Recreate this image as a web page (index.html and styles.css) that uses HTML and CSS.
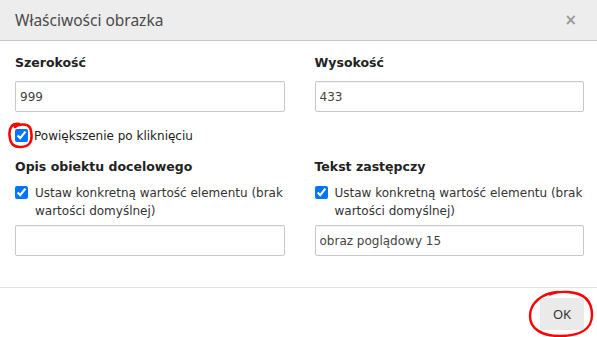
FILE: index.html
```html
<!DOCTYPE html>
<html lang="pl">
<head>
<meta charset="UTF-8">
<title>Właściwości obrazka</title>
<link rel="stylesheet" href="styles.css">
</head>
<body>
<div class="dialog">
  <header class="dlg-head">
    <span class="dlg-title">Właściwości obrazka</span>
    <span class="dlg-close">×</span>
  </header>
  <main class="dlg-body">
    <div class="row">
      <div class="field">
        <label class="lbl">Szerokość</label>
        <input class="txt" type="text" value="999">
      </div>
      <div class="field">
        <label class="lbl">Wysokość</label>
        <input class="txt" type="text" value="433">
      </div>
    </div>
    <label class="check zoom-check">
      <input type="checkbox" checked>
      <span>Powiększenie po kliknięciu</span>
      <svg class="scribble scribble-1" width="26" height="27" viewBox="0 0 26 27"><path d="M11 2 C4 1 1 6 1.5 13 C2 21 5 25.5 13 25 C21 24.5 24 21 23.5 13 C23 6 22 2 14 2.5 C10 3 8 4 7 5" fill="none" stroke="#f00" stroke-width="2.6" stroke-linecap="round"/></svg>
    </label>
    <div class="row">
      <div class="field">
        <label class="lbl lbl-sm">Opis obiektu docelowego</label>
        <label class="check">
          <input type="checkbox" checked>
          <span>Ustaw konkretną wartość elementu (brak wartości domyślnej)</span>
        </label>
        <input class="txt" type="text" value="">
      </div>
      <div class="field">
        <label class="lbl lbl-sm">Tekst zastępczy</label>
        <label class="check">
          <input type="checkbox" checked>
          <span>Ustaw konkretną wartość elementu (brak wartości domyślnej)</span>
        </label>
        <input class="txt" type="text" value="obraz poglądowy 15">
      </div>
    </div>
  </main>
  <footer class="dlg-foot">
    <button class="ok-btn">OK</button>
    <svg class="scribble scribble-2" width="68" height="50" viewBox="0 0 68 50"><path d="M30 3 C14 4 2 14 2 27 C2 40 14 47 32 47 C52 47 64 40 64 26 C64 12 56 4 40 3 C32 2.5 26 3.5 22 5.5" fill="none" stroke="#f00" stroke-width="2.4" stroke-linecap="round"/></svg>
  </footer>
</div>
</body>
</html>
```

FILE: styles.css
```css
body { margin:0; background:#fff; font-family:"DejaVu Sans", Verdana, sans-serif; font-size:12px; color:#333; }
.dialog { width:597px; height:337px; position:relative; overflow:hidden; }
.dlg-head { background:#ededed; border-bottom:1px solid #c8c8c8; display:flex; align-items:center; justify-content:space-between; padding:0 20px 0 15px; box-sizing:border-box; height:41px; }
.dlg-title { font-family:"Noto Sans","Open Sans",sans-serif; font-size:15.5px; color:#4a4a4a; }
.dlg-close { font-family:"DejaVu Sans",sans-serif; font-size:15px; font-weight:bold; color:#999; }
.dlg-body { padding:13px 13px 0 15px; }
.row { display:grid; grid-template-columns:1fr 1fr; column-gap:30px; }
.field { display:flex; flex-direction:column; }
.lbl { font-weight:bold; font-size:12.5px; color:#222; height:18px; line-height:18px; margin-bottom:9px; }
.lbl-sm { margin-bottom:8px; }
.txt { box-sizing:border-box; height:31px; width:100%; border:1px solid #c9c9c9; border-radius:2px; background:#fff; padding:0 4px; font-family:"DejaVu Sans",Verdana,sans-serif; font-size:12px; color:#444; margin:0; box-shadow:inset 0 1px 0 #f4f4f4; }
.check { display:flex; align-items:flex-start; line-height:18px; color:#333; position:relative; margin-bottom:5px; }
.check input { width:13px; height:13px; margin:2px 7px 0 0; flex:none; }
.zoom-check { margin-top:15px; margin-bottom:13px; color:#222; }
.zoom-check input { margin-right:6px; }
.scribble { position:absolute; pointer-events:none; }
.scribble-1 { left:-7px; top:-5px; }
.dlg-foot { position:absolute; left:0; right:0; top:287px; bottom:0; border-top:1px solid #e2e2e2; display:flex; justify-content:flex-end; align-items:flex-start; padding:10px 13px 0 0; }
.ok-btn { width:44px; height:32px; border:none; border-radius:2px; background:#eaeaea; font-family:"Noto Sans","Open Sans",sans-serif; font-size:13px; color:#333; padding:0; }
.scribble-2 { left:528px; top:1px; }
```
